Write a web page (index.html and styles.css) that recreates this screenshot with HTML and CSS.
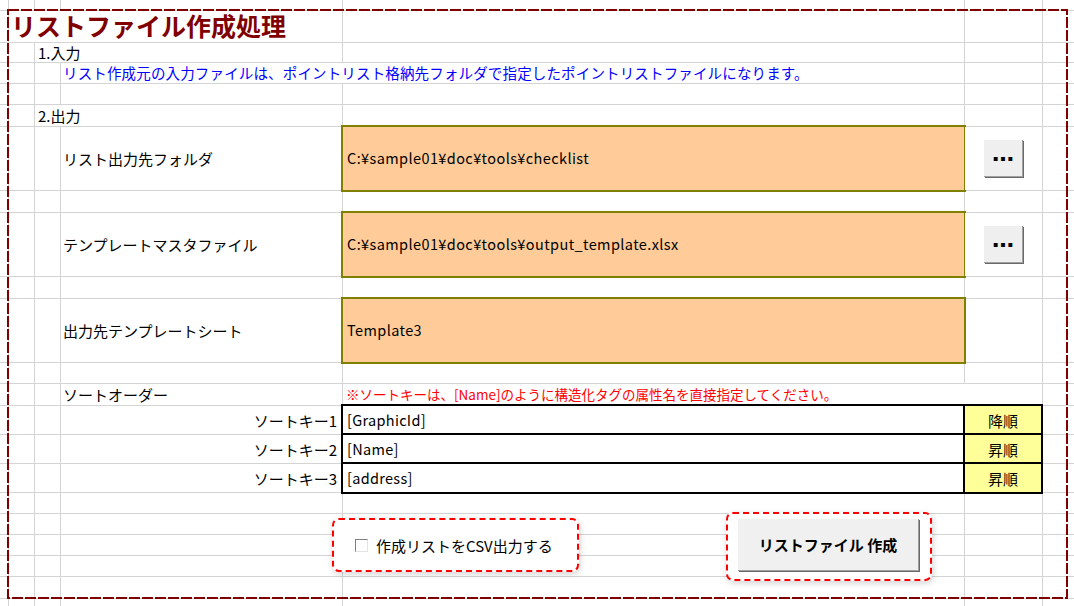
FILE: index.html
```html
<!DOCTYPE html>
<html>
<head>
	<meta charset="utf-8">
	<title>リストファイル作成処理</title>
	<link rel="stylesheet" href="styles.css">
</head>
<body>
	<div class="sheet">
		<div class="row h11"></div>

		<div class="row h32">
			<div class="cell title">リストファイル作成処理</div>
		</div>

		<!-- 1.入力 -->
		<div class="row h20">
			<div class="cell head">1.入力</div>
		</div>
		<div class="row h21">
			<div class="cell info">リスト作成元の入力ファイルは、ポイントリスト格納先フォルダで指定したポイントリストファイルになります。</div>
		</div>
		<div class="row h21"></div>

		<!-- 2.出力 -->
		<div class="row h22">
			<div class="cell head">2.出力</div>
		</div>

		<div class="row h64">
			<div class="cell label">リスト出力先フォルダ</div>
			<div class="cell path">C:¥sample01¥doc¥tools¥checklist</div>
			<div class="cell pick"><button type="button" class="dots">…</button></div>
		</div>
		<div class="row h22"></div>

		<div class="row h64">
			<div class="cell label">テンプレートマスタファイル</div>
			<div class="cell path">C:¥sample01¥doc¥tools¥output_template.xlsx</div>
			<div class="cell pick"><button type="button" class="dots">…</button></div>
		</div>
		<div class="row h22"></div>

		<div class="row h64">
			<div class="cell label">出力先テンプレートシート</div>
			<div class="cell path">Template3</div>
		</div>
		<div class="row h21"></div>

		<!-- ソート -->
		<div class="row h22">
			<div class="cell label">ソートオーダー</div>
			<div class="cell note">※ソートキーは、[Name]のように構造化タグの属性名を直接指定してください。</div>
		</div>
		<div class="row h29">
			<div class="cell key">ソートキー1</div>
			<div class="cell keyval">[GraphicId]</div>
			<div class="cell order">降順</div>
		</div>
		<div class="row h29">
			<div class="cell key">ソートキー2</div>
			<div class="cell keyval">[Name]</div>
			<div class="cell order">昇順</div>
		</div>
		<div class="row h29">
			<div class="cell key">ソートキー3</div>
			<div class="cell keyval">[address]</div>
			<div class="cell order">昇順</div>
		</div>

		<div class="row h21"></div>
		<div class="row h21"></div>
		<div class="row h21"></div>
		<div class="row h21"></div>
		<div class="row h22"></div>
		<div class="row h22"></div>

		<!-- 図形：チェックボックスと作成ボタン -->
		<div class="option">
			<span class="check"></span>
			<span>作成リストをCSV出力する</span>
		</div>
		<div class="make">
			<button type="button" class="make-button">リストファイル 作成</button>
		</div>

		<!-- 外枠 -->
		<svg class="frame" width="1061" height="590">
			<rect x="1" y="1" width="1059" height="588" fill="none" stroke="#800000" stroke-width="2" stroke-dasharray="11 2"></rect>
		</svg>
	</div>
</body>
</html>
```

FILE: styles.css
```css
body {
	margin: 0;
	padding: 0;
	font-family: "Noto Sans CJK JP", sans-serif;
	font-size: 15px;
	color: #000;
	background-color: #fff;
}

.sheet {
	position: relative;
	width: 1074px;
	height: 606px;
	overflow: hidden;
	background-image:
		linear-gradient(#d4d4d4, #d4d4d4),
		linear-gradient(#d4d4d4, #d4d4d4),
		linear-gradient(#d4d4d4, #d4d4d4),
		linear-gradient(#d4d4d4, #d4d4d4),
		linear-gradient(#d4d4d4, #d4d4d4),
		linear-gradient(#d4d4d4, #d4d4d4);
	background-size: 1px 100%;
	background-repeat: no-repeat;
	background-position: 8px 0, 34px 0, 60px 0, 342px 0, 964px 0, 1042px 0;
}

.row {
	display: grid;
	grid-template-columns: 9px 26px 26px 282px 622px 78px 1fr;
	box-sizing: border-box;
	border-bottom: 1px solid #d4d4d4;
}

.h11 { height: 11px; }
.h20 { height: 20px; }
.h21 { height: 21px; }
.h22 { height: 22px; }
.h29 { height: 29px; }
.h32 { height: 32px; }
.h64 { height: 64px; }

.cell {
	display: flex;
	align-items: center;
	white-space: nowrap;
	line-height: 1;
	background-color: #fff;
	margin-right: 1px;
	min-width: 0;
}

.title {
	grid-column: 2 / 5;
	align-items: flex-end;
	padding-left: 2px;
	padding-bottom: 4px;
	font-size: 25px;
	font-weight: bold;
	color: #800000;
}

.head {
	grid-column: 3 / 5;
	padding-left: 3px;
}

.info {
	grid-column: 4 / 6;
	padding-left: 2px;
	font-size: 14.5px;
	letter-spacing: 0.15px;
	color: #0000ff;
}

.label {
	grid-column: 4;
	padding-left: 2px;
}

.path {
	grid-column: 5;
	margin: -2px -1px -2px -2px;
	padding-left: 4px;
	border: 2px solid #808000;
	background-color: #ffcc99;
	font-size: 14.5px;
	letter-spacing: 0.4px;
}

.pick {
	grid-column: 6;
	justify-content: center;
}

.dots {
	width: 39px;
	height: 37px;
	padding: 0 0 9px 0;
	border: none;
	border-right: 1px solid #a0a0a0;
	border-bottom: 1px solid #a0a0a0;
	box-shadow: 1px 1px 0 #696969;
	background-color: #efefef;
	font-family: "DejaVu Sans", sans-serif;
	font-size: 22px;
	font-weight: bold;
	line-height: 1;
	color: #000;
}

.note {
	grid-column: 5 / 7;
	padding-left: 3px;
	font-size: 13.5px;
	color: #ff0000;
}

.key {
	grid-column: 4;
	justify-content: flex-end;
	padding-right: 5px;
}

.keyval {
	grid-column: 5;
	margin: -2px -1px -2px -2px;
	padding-left: 4px;
	border: 2px solid #000;
	font-size: 14.5px;
	letter-spacing: 0.3px;
}

.order {
	grid-column: 6;
	justify-content: center;
	margin: -2px 0 -2px -2px;
	border: 2px solid #000;
	background-color: #ffff99;
}

.option {
	position: absolute;
	left: 332px;
	top: 518px;
	width: 247px;
	height: 54px;
	box-sizing: border-box;
	display: flex;
	align-items: center;
	gap: 8px;
	padding-left: 21px;
	border: 2px dashed #ff0000;
	border-radius: 7px;
	background-color: #fff;
	box-shadow: 1px 2px 6px rgba(0, 0, 0, 0.18);
	font-size: 15px;
}

.check {
	width: 13px;
	height: 13px;
	box-sizing: border-box;
	border: 1px solid;
	border-color: #808080 #e3e3e3 #e3e3e3 #808080;
	background-color: #fff;
}

.make {
	position: absolute;
	left: 726px;
	top: 512px;
	width: 206px;
	height: 69px;
	box-sizing: border-box;
	padding: 5px 0 0 10px;
	border: 2px dashed #ff0000;
	border-radius: 7px;
	background-color: #fff;
	box-shadow: 1px 2px 6px rgba(0, 0, 0, 0.18);
}

.make-button {
	width: 181px;
	height: 52px;
	border: none;
	border-right: 1px solid #a0a0a0;
	border-bottom: 1px solid #a0a0a0;
	box-shadow: 1px 1px 0 #696969;
	background-color: #f0f0f0;
	font-family: "Noto Sans CJK JP", sans-serif;
	font-size: 15px;
	font-weight: bold;
	color: #000;
}

.frame {
	position: absolute;
	left: 7px;
	top: 9px;
	pointer-events: none;
}
```
